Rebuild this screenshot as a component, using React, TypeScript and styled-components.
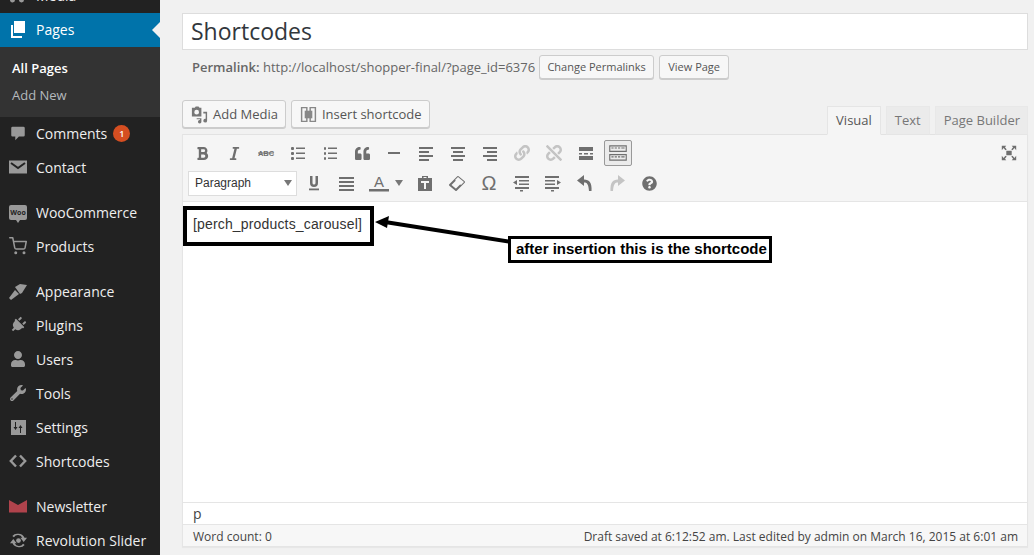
import React from "react";
import styled, { createGlobalStyle } from "styled-components";
import { FaPlug, FaUser, FaWrench, FaQuoteLeft, FaBold, FaItalic, FaQuestionCircle, FaLink, FaUnlink } from "react-icons/fa";
import { FiShoppingCart } from "react-icons/fi";

const Global = createGlobalStyle`
  html, body { margin: 0; padding: 0; height: 555px; overflow: hidden; background: #f1f1f1; }
  body { font-family: "Open Sans", sans-serif; font-size: 13px; color: #444; }
`;

const Page = styled.div`
  display: flex;
  width: 1034px;
  height: 555px;
  overflow: hidden;
`;

// admin menu
const Sidebar = styled.nav`
  width: 160px;
  flex: none;
  height: 555px;
  background: #222;
  overflow: hidden;
`;
const MenuList = styled.div`
  margin-top: -21px;
`;
const MenuItem = styled.div<{ $active?: boolean; $gap?: boolean }>`
  position: relative;
  display: flex;
  align-items: center;
  height: 34px;
  box-sizing: border-box;
  padding-bottom: 2px;
  margin-top: ${(p) => (p.$gap ? "11px" : "0")};
  background: ${(p) => (p.$active ? "#0073aa" : "transparent")};
  color: ${(p) => (p.$active ? "#fff" : "#eee")};
  font-size: 14px;
  ${(p) =>
    p.$active &&
    `&::after {
      content: "";
      position: absolute;
      right: 0;
      top: 9px;
      border: 8px solid transparent;
      border-right-color: #f1f1f1;
      border-left-width: 0;
    }`}
`;
const MenuIcon = styled.span<{ $active?: boolean; $color?: string; $turn?: boolean }>`
  width: 36px;
  flex: none;
  display: flex;
  align-items: center;
  justify-content: center;
  color: ${(p) => p.$color || (p.$active ? "#fff" : "#999")};
  svg { display: block; ${(p) => p.$turn && "transform: rotate(45deg);"} }
`;
const SubMenu = styled.div`
  height: 70px;
  padding-top: 8px;
  box-sizing: border-box;
  background: #333;
`;
const SubItem = styled.div<{ $current?: boolean }>`
  height: 27px;
  line-height: 27px;
  padding-left: 12px;
  font-size: 13px;
  font-weight: ${(p) => (p.$current ? 600 : 400)};
  color: ${(p) => (p.$current ? "#fff" : "#b4b9be")};
`;
const Badge = styled.span`
  width: 17px;
  height: 17px;
  margin-left: 6px;
  border-radius: 50%;
  background: #d54e21;
  color: #fff;
  font-size: 9px;
  font-weight: 600;
  display: flex;
  align-items: center;
  justify-content: center;
`;
const WooMark = styled.span`
  position: relative;
  width: 18px;
  height: 15px;
  background: #999;
  border-radius: 2px;
  color: #222;
  font-size: 7px;
  font-weight: 700;
  line-height: 15px;
  text-align: center;
  &::after {
    content: "";
    position: absolute;
    left: 7px;
    bottom: -3px;
    border: 2px solid transparent;
    border-top: 3px solid #999;
    border-bottom-width: 0;
  }
`;

// main column
const Main = styled.main`
  flex: 1;
  padding: 13px 6px 0 22px;
  min-width: 0;
`;
const TitleBox = styled.div`
  height: 37px;
  box-sizing: border-box;
  border: 1px solid #ddd;
  background: #fff;
  padding-left: 8px;
  font-size: 23px;
  line-height: 35px;
  color: #32373c;
`;
const PermalinkRow = styled.div`
  display: flex;
  align-items: center;
  gap: 5px;
  height: 24px;
  margin-top: 5px;
  padding-left: 10px;
  font-size: 13px;
  color: #666;
  b { font-weight: 600; }
`;
const PermalinkText = styled.span`
  margin-right: -1px;
`;
const SmallButton = styled.span<{ $w: number }>`
  width: ${(p) => p.$w}px;
  height: 24px;
  box-sizing: border-box;
  border: 1px solid #ccc;
  border-radius: 3px;
  background: #f7f7f7;
  box-shadow: 0 1px 0 #ccc;
  color: #555;
  font-size: 11px;
  line-height: 22px;
  text-align: center;
`;
const EditorTop = styled.div`
  display: flex;
  justify-content: space-between;
  align-items: flex-start;
  height: 34px;
  margin-top: 21px;
`;
const MediaButtons = styled.div`
  display: flex;
  gap: 5px;
`;
const MediaButton = styled.span`
  display: flex;
  align-items: center;
  gap: 4px;
  height: 28px;
  box-sizing: border-box;
  padding: 0 7px;
  border: 1px solid #ccc;
  border-radius: 3px;
  background: #f7f7f7;
  box-shadow: 0 1px 0 #ccc;
  color: #555;
  font-size: 13px;
  svg { display: block; }
`;
const Tabs = styled.div`
  display: flex;
  gap: 5px;
  align-self: flex-end;
  margin-bottom: -1px;
  position: relative;
  z-index: 1;
`;
const Tab = styled.span<{ $active?: boolean }>`
  height: 29px;
  box-sizing: border-box;
  padding: 0 8px;
  border: 1px solid ${(p) => (p.$active ? "#e5e5e5" : "#e8e8e8")};
  border-bottom-color: ${(p) => (p.$active ? "#f5f5f5" : "#e5e5e5")};
  background: ${(p) => (p.$active ? "#f5f5f5" : "#ebebeb")};
  color: ${(p) => (p.$active ? "#555" : "#777")};
  font-size: 13px;
  line-height: 27px;
  &:last-child { padding-right: 7px; }
`;
const Editor = styled.section`
  border: 1px solid #e5e5e5;
  border-top-color: #e2e2e2;
  background: #fff;
  box-shadow: 0 1px 1px rgba(0, 0, 0, 0.04);
`;
const Toolbars = styled.div`
  position: relative;
  height: 63px;
  background: #f5f5f5;
  border-bottom: 1px solid #e5e5e5;
  padding: 3px 0 0 3px;
`;
const ToolRow = styled.div`
  display: flex;
  align-items: center;
  height: 30px;
`;
const Tool = styled.span<{ $w?: number; $muted?: boolean; $pressed?: boolean }>`
  width: ${(p) => p.$w || 32}px;
  height: 28px;
  flex: none;
  display: flex;
  align-items: center;
  justify-content: center;
  box-sizing: border-box;
  color: ${(p) => (p.$muted ? "#c4c4c4" : "#6f6f6f")};
  ${(p) => p.$pressed && "border: 1px solid #999; border-radius: 2px; background: #ebebeb; margin-left: 2px; width: 28px; height: 26px;"}
  svg { display: block; }
`;
const OmegaTool = styled(Tool)`
  font-family: "Liberation Sans", sans-serif;
  font-size: 20px;
`;
const FormatSelect = styled.span`
  width: 109px;
  height: 25px;
  flex: none;
  margin: 0 1px 0 2px;
  box-sizing: border-box;
  border: 1px solid #ddd;
  background: #fff;
  padding-left: 6px;
  display: flex;
  align-items: center;
  justify-content: space-between;
  font-family: "Liberation Sans", Arial, sans-serif;
  font-size: 12px;
  color: #333;
`;
const Caret = styled.i<{ $tight?: boolean }>`
  width: 0;
  height: 0;
  margin: ${(p) => (p.$tight ? "0 0 0 6px" : "0 4px 0 0")};
  border: 4px solid transparent;
  border-top: 6px solid #777;
  border-bottom-width: 0;
`;
const FullscreenTool = styled.span`
  position: absolute;
  right: 9px;
  top: 9px;
  color: #6f6f6f;
  svg { display: block; }
`;
const Content = styled.div`
  position: relative;
  height: 300px;
  padding-top: 4px;
  box-sizing: border-box;
`;
const ShortcodeBox = styled.div`
  width: 191px;
  height: 40px;
  box-sizing: border-box;
  border: 4px solid #000;
  padding-left: 6px;
  font-family: "Liberation Sans", Arial, sans-serif;
  font-size: 14px;
  letter-spacing: 0.16px;
  line-height: 28px;
  color: #333;
`;
const Callout = styled.div`
  position: absolute;
  left: 325px;
  top: 34px;
  width: 264px;
  height: 27px;
  box-sizing: border-box;
  border: 3px solid #000;
  background: #fff;
  padding-left: 5px;
  font-family: "Liberation Sans", Arial, sans-serif;
  font-size: 15px;
  font-weight: 700;
  line-height: 20px;
  color: #000;
  white-space: nowrap;
`;
const ArrowOverlay = styled.svg`
  position: absolute;
  left: 188px;
  top: 10px;
`;
const PathBar = styled.div`
  height: 22px;
  box-sizing: border-box;
  border-top: 1px solid #e5e5e5;
  padding-left: 10px;
  font-size: 14px;
  line-height: 21px;
  color: #444;
`;
const StatusBar = styled.div`
  display: flex;
  justify-content: space-between;
  height: 22px;
  box-sizing: border-box;
  border-top: 1px solid #e5e5e5;
  background: #f7f7f7;
  padding: 0 9px 0 10px;
  font-size: 12px;
  line-height: 23px;
  color: #444;
`;

const Svg = ({ size = 20, children }: { size?: number; children: React.ReactNode }) => (
  <svg width={size} height={size} viewBox="0 0 20 20" fill="currentColor">
    {children}
  </svg>
);

const MediaMenuIcon = () => (
  <Svg>
    <path d="M4 1h12v14a2.500 2.500 0 1 1-2-2.400V5H7v10a2.500 2.500 0 1 1-3-2.400z" />
  </Svg>
);
const PagesIcon = () => (
  <Svg>
    <path d="M6 2h11v12H6z" />
    <path d="M3 6h2v11h9v2H3z" />
  </Svg>
);
const CommentIcon = () => (
  <Svg size={18}>
    <path d="M4 3h12a1.500 1.500 0 0 1 1.500 1.500v8a1.500 1.500 0 0 1-1.500 1.500h-5l-4 4v-4H4a1.500 1.500 0 0 1-1.500-1.500v-8A1.500 1.500 0 0 1 4 3z" />
  </Svg>
);
const MailIcon = () => (
  <Svg>
    <path d="M1 3.500h18v13H1z" />
    <path d="M3 6l7 5 7-5" fill="none" stroke="#222" strokeWidth="2" />
  </Svg>
);
const BrushIcon = () => (
  <Svg>
    <path d="M1 17l6-8 4 4-8 6z" />
    <path d="M7 6l5-3 7 1-5 8-2 1z" />
  </Svg>
);
const SettingsIcon = () => (
  <Svg>
    <path fillRule="evenodd" d="M3 3h15v15H3zM7 5v5H5.500L7.500 13l2-3H8V5zM13 16v-5h1.500l-2-3-2 3H12v5z" />
  </Svg>
);
const CodeIcon = () => (
  <Svg>
    <path d="M8 4.500L2.800 10 8 15.500M12 4.500L17.200 10 12 15.500" fill="none" stroke="currentColor" strokeWidth="2.400" />
  </Svg>
);
const NewsIcon = () => (
  <svg width="18" height="14" viewBox="0 0 18 14" fill="#b0434c">
    <path d="M0 1l9 5 9-5v12.500H0z" />
  </svg>
);
const SliderIcon = () => (
  <Svg size={19}>
    <path d="M10 3a7 7 0 0 1 6.300 4H19l-3.500 4.500L12 7h2a5 5 0 0 0-8.800-.500L3.500 5.300A7 7 0 0 1 10 3zM10 17a7 7 0 0 1-6.300-4H1l3.500-4.500L8 13H6a5 5 0 0 0 8.800.500l1.700 1.200A7 7 0 0 1 10 17z" />
    <circle cx="10" cy="10" r="2.500" />
  </Svg>
);

const Lines = ({ rows }: { rows: [number, number][] }) => (
  <Svg>
    {rows.map(([x, w], i) => (
      <rect key={i} x={x} y={4 + i * 4} width={w} height="2" />
    ))}
  </Svg>
);
const BulletIcon = ({ numbered }: { numbered?: boolean }) => (
  <Svg>
    {[4, 9, 14].map((y) => (
      <g key={y}>
        <rect x={numbered ? 4 : 3} y={y} width={numbered ? 2 : 3} height="3" rx="1" />
        <rect x="8" y={y + 0.5} width="9" height="1.500" />
      </g>
    ))}
  </Svg>
);
const HrIcon = () => (
  <Svg>
    <rect x="4" y="9" width="12" height="2" />
  </Svg>
);
const StrikeIcon = () => (
  <svg width="20" height="20" viewBox="0 0 20 20">
    <text x="10" y="13" textAnchor="middle" fontSize="7.500" fontWeight="700" fill="currentColor" fontFamily="Liberation Sans, sans-serif">ABC</text>
    <rect x="2" y="9.500" width="16" height="1" fill="currentColor" />
  </svg>
);
const MoreIcon = () => (
  <Svg>
    <path d="M3 4h14v4H3zM3 13h14v4H3zM3 10h3v1.500H3zM8 10h4v1.500H8zM14 10h3v1.500h-3z" />
  </Svg>
);
const KitchenIcon = () => (
  <Svg size={22}>
    <path fillRule="evenodd" d="M2 3h16v6H2zM3 4v4h14V4zM2 11h16v6H2zM3 12v4h14v-4z" />
    <path d="M4 5h2v1H4zM7 5h2v1H7zM10 5h2v1h-2zM13 5h3v1h-3zM4 13h2v1H4zM7 13h2v1H7zM10 13h2v1h-2zM13 13h3v1h-3z" />
  </Svg>
);
const UnderlineIcon = () => (
  <Svg>
    <path d="M6 3h2.500v7a1.500 1.500 0 0 0 3 0V3H14v7a4 4 0 0 1-8 0z" />
    <rect x="5" y="15.500" width="10" height="1.800" />
  </Svg>
);
const JustifyIcon = () => (
  <Svg>
    <path d="M3 4h15v2H3zM3 8h15v2H3zM3 12h15v2H3zM3 16h15v2H3z" />
  </Svg>
);
const ColorIcon = () => (
  <svg width="20" height="20" viewBox="0 0 20 20">
    <text x="10" y="14" textAnchor="middle" fontSize="15" fill="currentColor" fontFamily="Liberation Sans, sans-serif">A</text>
    <rect x="0" y="16" width="20" height="2.500" fill="currentColor" />
  </svg>
);
const PasteIcon = () => (
  <Svg>
    <path fillRule="evenodd" d="M3 5h4V3h6v2h4v13H3zM8.500 4v1h3V4zM6 8v2h3v6h2v-6h3V8z" />
  </Svg>
);
const EraserIcon = () => (
  <Svg>
    <path d="M3 12l8-8 6 5-8 8z" fill="none" stroke="currentColor" strokeWidth="2" strokeLinejoin="round" />
    <path d="M11 4l6 5-3 3-6-5z" fill="#f5f5f5" />
  </Svg>
);
const OutdentIcon = ({ flip }: { flip?: boolean }) => (
  <svg width="20" height="20" viewBox="0 0 20 20" fill="currentColor" style={flip ? undefined : { transform: "scaleX(-1)" }}>
    <path d="M2 3h14v2H2zM2 7h10v1.500H2zM2 10.500h10V12H2zM2 14h14v2H2zM14 7l4 2.500-4 2.500zM8 17h3v1.500H8z" />
  </svg>
);
const UndoIcon = ({ flip }: { flip?: boolean }) => (
  <svg width="20" height="20" viewBox="0 0 20 20" fill="currentColor" style={flip ? { transform: "scaleX(-1)" } : undefined}>
    <path d="M9 2L2 7.500 9 13V9.500c3 0 4.500 1.500 5 8.500h2.500c.5-8-2-11.500-7.500-11.500z" />
  </svg>
);
const FullscreenIcon = () => (
  <Svg size={18}>
    <rect x="7" y="7.500" width="6" height="5" />
    <path d="M2 2h5L5.500 3.500 7.500 6 6 7 4 4.500 2 7zM18 2v5l-2-2.500L14 7l-1.500-1L14.500 3.500 13 2zM2 18v-5l2 2.500L6 13l1.500 1L5.500 16.500 7 18zM18 18h-5l1.500-1.500L12.500 14 14 13l2 2.500L18 13z" />
  </Svg>
);
const AddMediaIcon = () => (
  <svg width="19" height="19" viewBox="0 0 20 20" fill="#777">
    <path fillRule="evenodd" d="M2 3h3l1-1.500h3L10 3h2v9H2zM7 5a2.500 2.500 0 1 0 0 5 2.500 2.500 0 0 0 0-5z" />
    <path d="M14 7h4v9.500a2 2 0 1 1-1.500-1.900V9H14zM7 14h5v3.500a1.800 1.800 0 1 1-1.500-1.700V15H7z" />
  </svg>
);
const ShortcodeIcon = () => (
  <svg width="19" height="19" viewBox="0 0 20 20" fill="#888">
    <path fillRule="evenodd" d="M2 2h7v16H2zM3.500 3.500v13h4v-13zM11 2h7v16h-7zM12.500 3.500v13h4v-13z" />
    <rect x="6" y="6" width="8" height="8" />
  </svg>
);

const menuItems = [
  { label: "Comments", icon: <CommentIcon />, badge: "1" },
  { label: "Contact", icon: <MailIcon /> },
  { label: "WooCommerce", icon: <WooMark>Woo</WooMark>, gap: true },
  { label: "Products", icon: <FiShoppingCart size={18} /> },
  { label: "Appearance", icon: <BrushIcon />, gap: true },
  { label: "Plugins", icon: <FaPlug size={16} />, turn: true },
  { label: "Users", icon: <FaUser size={16} /> },
  { label: "Tools", icon: <FaWrench size={16} /> },
  { label: "Settings", icon: <SettingsIcon /> },
  { label: "Shortcodes", icon: <CodeIcon /> },
  { label: "Newsletter", icon: <NewsIcon />, gap: true, color: "#b0434c" },
  { label: "Revolution Slider", icon: <SliderIcon /> },
];

export default function App() {
  return (
    <Page>
      <Global />
      <Sidebar>
        <MenuList>
          <MenuItem>
            <MenuIcon>
              <MediaMenuIcon />
            </MenuIcon>
            Media
          </MenuItem>
          <MenuItem $active>
            <MenuIcon $active>
              <PagesIcon />
            </MenuIcon>
            Pages
          </MenuItem>
          <SubMenu>
            <SubItem $current>All Pages</SubItem>
            <SubItem>Add New</SubItem>
          </SubMenu>
          {menuItems.map((m) => (
            <MenuItem key={m.label} $gap={m.gap}>
              <MenuIcon $color={m.color} $turn={m.turn}>{m.icon}</MenuIcon>
              {m.label}
              {m.badge && <Badge>{m.badge}</Badge>}
            </MenuItem>
          ))}
        </MenuList>
      </Sidebar>
      <Main>
        <TitleBox>Shortcodes</TitleBox>
        <PermalinkRow>
          <PermalinkText>
            <b>Permalink:</b> http://localhost/shopper-final/?page_id=6376
          </PermalinkText>
          <SmallButton $w={115}>Change Permalinks</SmallButton>
          <SmallButton $w={70}>View Page</SmallButton>
        </PermalinkRow>
        <EditorTop>
          <MediaButtons>
            <MediaButton>
              <AddMediaIcon />
              Add Media
            </MediaButton>
            <MediaButton>
              <ShortcodeIcon />
              Insert shortcode
            </MediaButton>
          </MediaButtons>
          <Tabs>
            <Tab $active>Visual</Tab>
            <Tab>Text</Tab>
            <Tab>Page Builder</Tab>
          </Tabs>
        </EditorTop>
        <Editor>
          <Toolbars>
            <ToolRow>
              <Tool><FaBold size={15} /></Tool>
              <Tool><FaItalic size={15} /></Tool>
              <Tool><StrikeIcon /></Tool>
              <Tool><BulletIcon /></Tool>
              <Tool><BulletIcon numbered /></Tool>
              <Tool><FaQuoteLeft size={15} /></Tool>
              <Tool><HrIcon /></Tool>
              <Tool><Lines rows={[[3, 14], [3, 10], [3, 14], [3, 10]]} /></Tool>
              <Tool><Lines rows={[[3, 14], [5, 10], [3, 14], [5, 10]]} /></Tool>
              <Tool><Lines rows={[[3, 14], [7, 10], [3, 14], [7, 10]]} /></Tool>
              <Tool $muted><FaLink size={16} /></Tool>
              <Tool $muted><FaUnlink size={16} /></Tool>
              <Tool><MoreIcon /></Tool>
              <Tool $pressed><KitchenIcon /></Tool>
            </ToolRow>
            <ToolRow>
              <FormatSelect>
                Paragraph
                <Caret />
              </FormatSelect>
              <Tool><UnderlineIcon /></Tool>
              <Tool><JustifyIcon /></Tool>
              <Tool $w={47}>
                <ColorIcon />
                <Caret $tight />
              </Tool>
              <Tool><PasteIcon /></Tool>
              <Tool><EraserIcon /></Tool>
              <OmegaTool>Ω</OmegaTool>
              <Tool><OutdentIcon /></Tool>
              <Tool><OutdentIcon flip /></Tool>
              <Tool><UndoIcon /></Tool>
              <Tool $muted><UndoIcon flip /></Tool>
              <Tool><FaQuestionCircle size={15} /></Tool>
            </ToolRow>
            <FullscreenTool><FullscreenIcon /></FullscreenTool>
          </Toolbars>
          <Content>
            <ShortcodeBox>[perch_products_carousel]</ShortcodeBox>
            <ArrowOverlay width="150" height="40" viewBox="0 0 150 40">
              <path d="M140 30L14 10" stroke="#000" strokeWidth="4" />
              <path d="M4 10l14-6-2 12z" fill="#000" />
            </ArrowOverlay>
            <Callout>after insertion this is the shortcode</Callout>
          </Content>
          <PathBar>p</PathBar>
          <StatusBar>
            <span>Word count: 0</span>
            <span>Draft saved at 6:12:52 am. Last edited by admin on March 16, 2015 at 6:01 am</span>
          </StatusBar>
        </Editor>
      </Main>
    </Page>
  );
}
